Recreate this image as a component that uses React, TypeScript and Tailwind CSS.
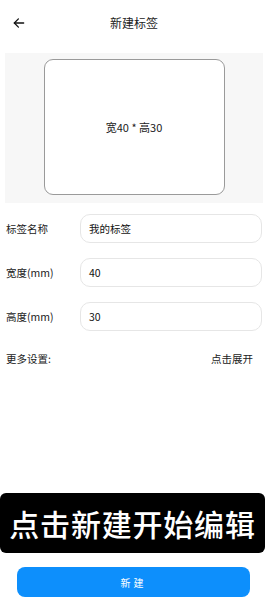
import React from 'react';

const Field: React.FC<{ label: string; value: string }> = ({ label, value }) => (
  <div className="flex items-center h-[29px]">
    <div className="w-[80px] pl-[6px] text-[10.5px] text-[#222]">{label}</div>
    <div className="w-[182px] h-[29px] border border-[#e6e6e6] rounded-[10px] flex items-center pl-[8px] text-[10.5px] text-[#111]">
      {value}
    </div>
  </div>
);

export default function App() {
  return (
    <div
      className="w-[268px] h-[610px] bg-white flex flex-col overflow-hidden"
      style={{ fontFamily: '"Noto Sans CJK SC", "Noto Sans", sans-serif' }}
    >
      {/* Header */}
      <div className="h-[46px] flex items-center relative">
        <svg className="absolute left-[12px] top-[16px]" width="14" height="14" viewBox="0 0 24 24" fill="none" stroke="#111" strokeWidth="2.2" strokeLinecap="round" strokeLinejoin="round">
          <path d="M20 12H4" />
          <path d="M11 5l-7 7 7 7" />
        </svg>
        <div className="w-full text-center text-[12px] text-[#222]">新建标签</div>
      </div>

      {/* Preview */}
      <div className="mt-[7px] mx-[5px] h-[150px] bg-[#f7f7f7] pt-[6px]">
        <div className="mx-auto w-[181px] h-[136px] bg-white border border-[#9a9a9a] rounded-[9px] flex items-center justify-center text-[11px] text-[#222]">
          宽40 * 高30
        </div>
      </div>

      {/* Form */}
      <div className="mt-[11px] flex flex-col gap-[15px]">
        <Field label="标签名称" value="我的标签" />
        <Field label="宽度(mm)" value="40" />
        <Field label="高度(mm)" value="30" />
      </div>

      <div className="mt-[20px] flex justify-between items-center pl-[6px] pr-[15px] text-[10.5px] text-[#222]">
        <span>更多设置:</span>
        <span>点击展开</span>
      </div>

      <div className="flex-1" />

      {/* Banner */}
      <div className="mr-[3px] h-[60px] bg-black rounded-[6px] flex items-center justify-center">
        <span className="text-white text-[30px] font-medium leading-none tracking-[0.8px]">点击新建开始编辑</span>
      </div>

      {/* Button */}
      <div className="mt-[14px] mb-[13px] ml-[17px] mr-[18px] h-[30px] bg-[#0d8ffc] rounded-[8px] flex items-center justify-center text-white text-[10px] tracking-[3px]">
        新建
      </div>
    </div>
  );
}
